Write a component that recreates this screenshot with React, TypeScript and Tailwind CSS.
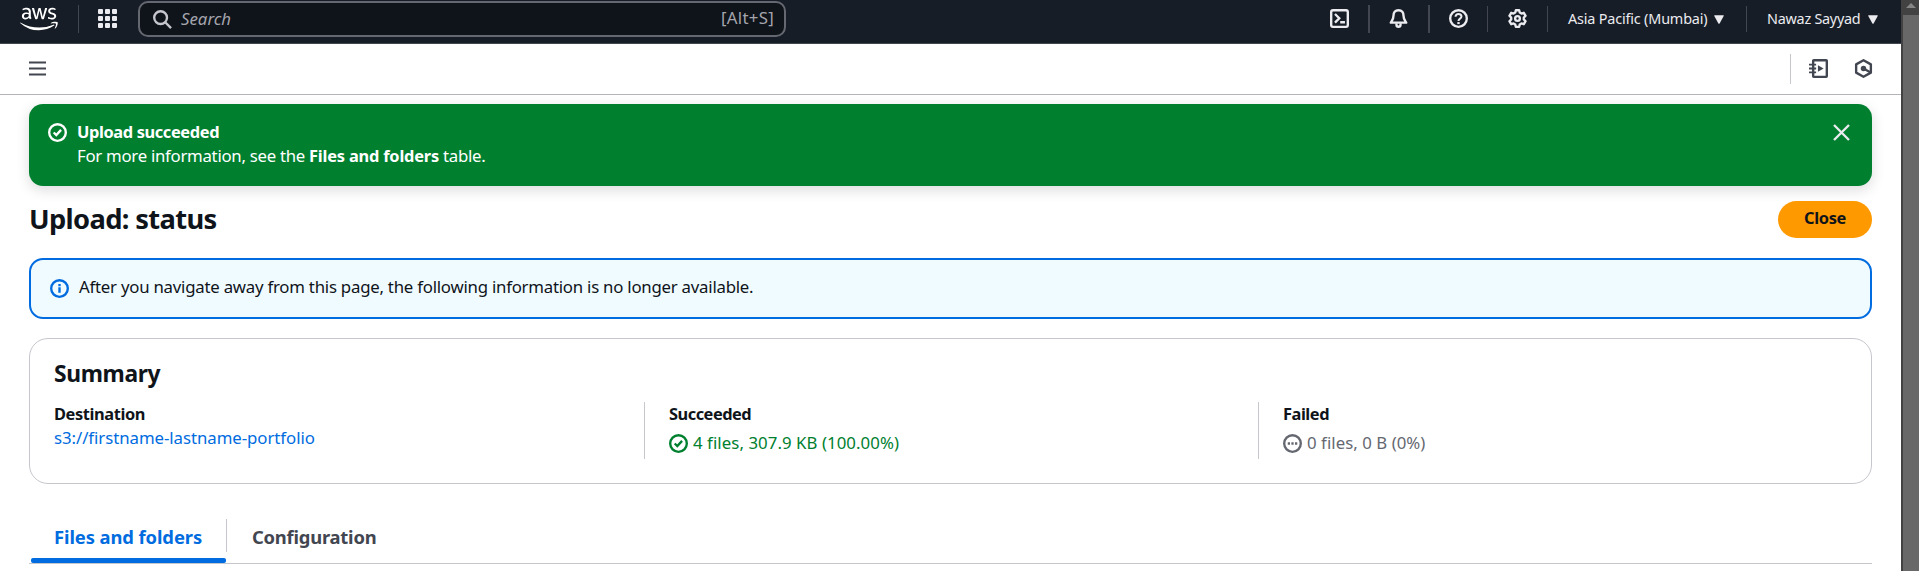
import React from "react";
import { FaAws } from "react-icons/fa";

type IconProps = { className?: string; children: React.ReactNode };

function Icon({ className = "", children }: IconProps) {
  return (
    <svg
      viewBox="0 0 16 16"
      fill="none"
      stroke="currentColor"
      strokeWidth="2"
      className={`h-[19px] w-[19px] shrink-0 ${className}`}
    >
      {children}
    </svg>
  );
}

const Divider = ({ className = "" }: { className?: string }) => (
  <span className={`shrink-0 bg-[#424650] ${className}`} />
);

const Caret = ({ className = "" }: { className?: string }) => (
  <svg viewBox="0 0 10 9" className={`h-[9px] w-[10px] shrink-0 ${className}`} fill="currentColor">
    <path d="M0.8 0.3h8.4c.5 0 .7.4.5.8L5.6 8.4c-.3.5-.9.5-1.2 0L.3 1.1C.1.7.3.3.8.3z" />
  </svg>
);

function TopNav() {
  return (
    <header className="flex h-[44px] items-start border-b border-[#424650] bg-[#161d26] text-[#ebebf0]">
      <FaAws className="mt-1 ml-5 h-[30px] w-[38px] shrink-0 text-white" />
      <Divider className="mt-[5px] ml-5 h-[28px] w-px" />
      <svg viewBox="0 0 19 19" className="mt-[9px] ml-[19px] h-[19px] w-[19px] shrink-0" fill="currentColor">
        {[0, 7, 14].map((y) =>
          [0, 7, 14].map((x) => <rect key={`${x}-${y}`} x={x} y={y} width="5" height="5" rx="1" />)
        )}
      </svg>
      <div className="mt-px ml-[21px] flex h-[36px] w-[648px] shrink-0 items-center rounded-[10px] border-2 border-[#656871] bg-[#0f141a] pr-[10px] pl-[13px]">
        <Icon className="text-[#c6c6cd]">
          <circle cx="6.4" cy="6.4" r="5.4" />
          <path d="m10.3 10.3 4.9 4.9" />
        </Icon>
        <span className="ml-[9px] text-[16.8px] text-[#a4a4ad] italic">Search</span>
        <span className="-mt-[3px] ml-auto text-[16.8px] tracking-[0.28px] text-[#a4a4ad]">[Alt+S]</span>
      </div>

      <div className="ml-auto flex items-start">
        <Icon className="mt-[9px]">
          <rect x="1" y="1" width="14" height="14" rx="1.5" />
          <path d="m4.2 4.2 3.6 3.6-3.6 3.6M8.6 11.2h4" />
        </Icon>
        <Divider className="mt-[5px] ml-[19px] h-[28px] w-[2px]" />
        <Icon className="mt-[9px] ml-[19px]">
          <path d="M8 1C5 1 3.8 3.2 3.8 5.4c0 3-1 4-2.3 6.1h13c-1.3-2.1-2.3-3.1-2.3-6.1C12.2 3.2 11 1 8 1z" strokeLinejoin="round" />
          <path d="M6.3 12v1.5c0 .8.7 1.400 1.700 1.400s1.700-.6 1.700-1.400V12" />
        </Icon>
        <Divider className="mt-[5px] ml-[20px] h-[28px] w-[2px]" />
        <Icon className="mt-[9px] ml-[19px]">
          <circle cx="8" cy="8" r="7" />
          <path d="M5.500 6.500C5.500 5 6.500 4.200 8 4.200s2.500.9 2.500 2.200c0 1.700-2.500 1.700-2.500 3.600" strokeWidth="1.7" />
          <path d="M8 11v1.700" />
        </Icon>
        <Divider className="mt-[6px] ml-[19px] h-[26px] w-px" />
        <Icon className="mt-[9px] ml-[20px]">
          <path
            d="M6.600 1h2.800l.5 2 1.400.8 2-.6 1.500 2.500L13.300 7.200v1.600l1.500 1.500-1.500 2.500-2-.6-1.400.8-.5 2H6.600l-.5-2-1.400-.8-2 .6-1.500-2.500 1.500-1.500V7.200L1.200 5.700l1.500-2.500 2 .6L6.100 3z"
            strokeLinejoin="round"
          />
          <circle cx="8" cy="8" r="2" />
        </Icon>
        <Divider className="mt-[6px] ml-[20px] h-[26px] w-px" />
        <div className="mt-[7px] ml-[20px] flex h-6 w-[156px] items-center text-[14.4px] tracking-[-0.17px] whitespace-nowrap">
          Asia Pacific (Mumbai)
          <Caret className="ml-auto" />
        </div>
        <Divider className="mt-[6px] ml-[22px] h-[26px] w-px" />
        <div className="mt-[7px] mr-[23px] ml-[20px] flex h-6 w-[111px] items-center text-[14.4px] tracking-[-0.25px] whitespace-nowrap">
          Nawaz Sayyad
          <Caret className="ml-auto" />
        </div>
      </div>
    </header>
  );
}

function Toolbar() {
  return (
    <div className="flex h-[51px] items-start border-b border-[#b4b4bb] text-[#424650]">
      <svg viewBox="0 0 17 15" className="mt-[17px] ml-[29px] h-[15px] w-[17px]" stroke="currentColor" strokeWidth="2">
        <path d="M0 1.500h17M0 7.500h17M0 13.500h17" />
      </svg>
      <span className="mt-[10px] ml-auto h-[30px] w-px bg-[#c6c6cd]" />
      <Icon className="mt-[15px] ml-[18px]">
        <rect x="3.500" y="1" width="11.500" height="14" rx="0.500" />
        <path d="M0 4.700h6M0 8h6M0 11.300h6" strokeWidth="1.500" />
        <path d="M7.500 5.200v5.600L12.300 8z" fill="currentColor" stroke="none" />
      </Icon>
      <Icon className="mt-[15px] mr-[28px] ml-[26px]">
        <path d="m8 1 6.200 3.500v7L8 15l-6.200-3.500v-7z" strokeLinejoin="round" />
        <circle cx="8" cy="8" r="2.300" fill="currentColor" stroke="none" />
        <path d="m8 8 6 3.300" />
      </Icon>
    </div>
  );
}

function Check() {
  return (
    <Icon>
      <circle cx="8" cy="8" r="7" />
      <path d="m4.800 8 2.200 2.100L11 5.800" />
    </Icon>
  );
}

function SuccessBanner() {
  return (
    <section className="mt-[9px] flex h-[82px] rounded-[14px] bg-[#00802f] pt-[19px] pl-[19px] text-white shadow-[0_4px_14px_rgba(0,7,22,0.14)]">
      <Check />
      <div className="-mt-[3px] ml-[10px] text-[16.8px] leading-6">
        <div className="text-[16.4px] font-bold tracking-[-0.38px]">Upload succeeded</div>
        <p className="tracking-[-0.28px]">
          For more information, see the{" "}
          <b className="text-[16.4px] font-bold tracking-[-0.2px]">Files and folders</b> table.
        </p>
      </div>
      <Icon className="mr-[21px] ml-auto text-[#ebebf0]">
        <path d="m1.700 1.700 12.600 12.600M14.300 1.700 1.700 14.300" />
      </Icon>
    </section>
  );
}

function Summary() {
  return (
    <section className="mt-[19px] h-[146px] rounded-[19px] border border-[#c6c6cd] px-6 pt-[20px]">
      <h2 className="text-[22.8px] leading-[30px] font-bold tracking-[-0.35px]">Summary</h2>
      <div className="mt-[13px] flex h-[57px] text-[16.8px] leading-6">
        <div className="w-[590px]">
          <div className="text-[16.4px] font-bold tracking-[-0.4px]">Destination</div>
          <a className="tracking-[-0.05px] text-[#006ce0] [font-variant-ligatures:common-ligatures]">
            s3://firstname-lastname-portfolio
          </a>
        </div>
        <div className="w-[614px] border-l border-[#c6c6cd] pl-6">
          <div className="text-[16.4px] font-bold tracking-[-0.5px]">Succeeded</div>
          <div className="mt-[5px] flex items-center gap-[5px] tracking-[0.07px] text-[#00802f]">
            <Check />
            <span>4 files, 307.9 KB (100.00%)</span>
          </div>
        </div>
        <div className="border-l border-[#c6c6cd] pl-6">
          <div className="text-[16.4px] font-bold tracking-[-0.45px]">Failed</div>
          <div className="mt-[5px] flex items-center gap-[5px] tracking-[0.05px] text-[#656871]">
            <Icon>
              <circle cx="8" cy="8" r="7" />
              <path d="M4 8h1.900M7.050 8h1.900M10.100 8H12" />
            </Icon>
            <span>0 files, 0 B (0%)</span>
          </div>
        </div>
      </div>
    </section>
  );
}

function Tabs() {
  return (
    <nav className="mt-[35px] flex h-[45px] border-b border-[#c6c6cd] text-[18.4px] font-bold">
      <div className="ml-[2px] flex w-[195px] flex-col text-[#006ce0]">
        <span className="h-[39px] pl-[23px] leading-[35px] tracking-[-0.09px]">Files and folders</span>
        <span className="h-[5px] shrink-0 rounded-[2px] bg-[#006ce0]" />
      </div>
      <span className="h-[33px] w-px bg-[#c6c6cd]" />
      <span className="pl-[25px] leading-[35px] tracking-[-0.22px] text-[#424650]">Configuration</span>
    </nav>
  );
}

export default function App() {
  return (
    <div className="flex h-[571px] w-[1919px] overflow-hidden bg-white font-['Noto_Sans',sans-serif] text-[#0f141a]">
      <div className="w-[1901px]">
        <TopNav />
        <Toolbar />
        <main className="mr-[29px] ml-[29px]">
          <SuccessBanner />
          <div className="mt-[15px] flex h-[37px] items-center justify-between">
            <h1 className="text-[27.3px] font-bold tracking-[-0.65px]">Upload: status</h1>
            <button className="h-[37px] w-[94px] rounded-full bg-[#ff9900] pb-[2px] text-[16.4px] font-bold tracking-[-0.32px]">
              Close
            </button>
          </div>
          <div className="mt-5 flex h-[61px] items-center rounded-[14px] border-2 border-[#006ce0] bg-[#f0fbff] pl-[19px]">
            <Icon className="text-[#006ce0]">
              <circle cx="8" cy="8" r="7" />
              <path d="M8 7v4.500M8 4.200v1.800" />
            </Icon>
            <p className="-mt-[3px] ml-[10px] text-[16.8px] tracking-[-0.23px]">
              After you navigate away from this page, the following information is no longer available.
            </p>
          </div>
          <Summary />
          <Tabs />
        </main>
      </div>
      <aside className="flex w-[18px] flex-col bg-[#424242]">
        <div className="flex h-[15px] justify-center pt-[3px] pl-[2px]">
          <svg viewBox="0 0 10 5" className="h-[5px] w-[10px]" fill="#868686">
            <path d="M5 0l5 5H0z" />
          </svg>
        </div>
        <div className="ml-[2px] flex-1 bg-[#686868]" />
      </aside>
    </div>
  );
}
